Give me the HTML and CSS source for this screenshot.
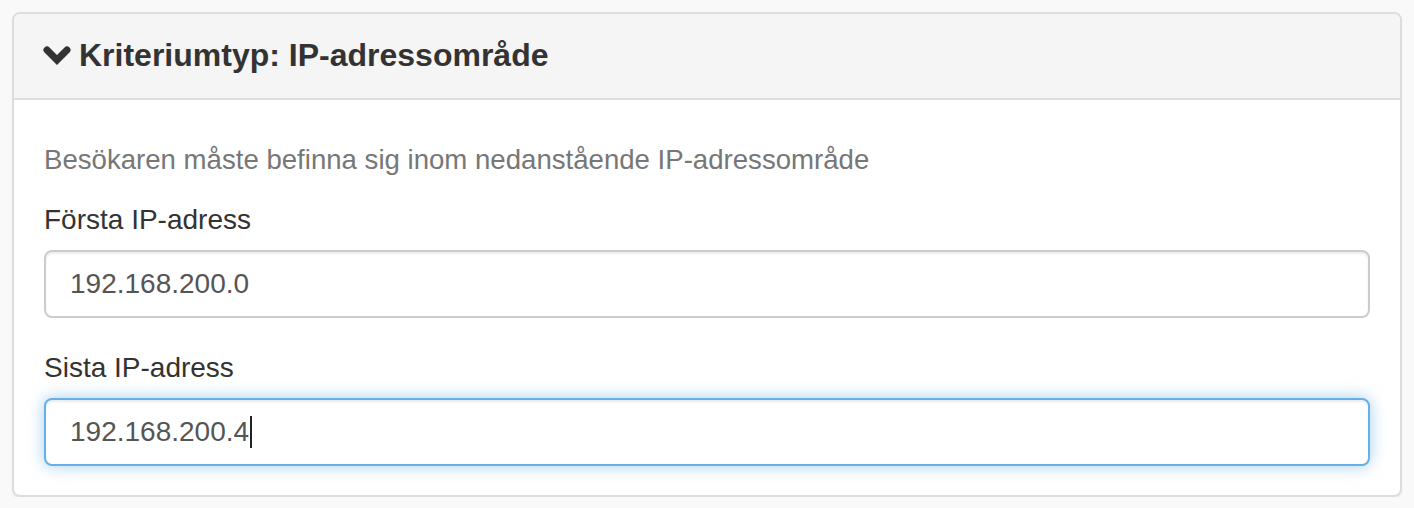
FILE: index.html
```html
<!DOCTYPE html>
<html lang="sv">
<head>
<meta charset="utf-8">
<title>Kriteriumtyp</title>
<link rel="stylesheet" href="styles.css">
</head>
<body>
<div class="panel">
  <div class="panel-heading">
    <svg class="chevron" width="28" height="20" viewBox="0 0 28 20" aria-hidden="true">
      <polyline points="4,4 14,14 24,4" fill="none" stroke="#333" stroke-width="7" stroke-linecap="round" stroke-linejoin="miter"/>
    </svg>
    <h3 class="panel-title">Kriteriumtyp: IP-adressområde</h3>
  </div>
  <div class="panel-body">
    <p class="help-block">Besökaren måste befinna sig inom nedanstående IP-adressområde</p>
    <div class="form-group">
      <label class="control-label" for="first">Första IP-adress</label>
      <input class="form-control" id="first" type="text" value="192.168.200.0">
    </div>
    <div class="form-group last">
      <label class="control-label">Sista IP-adress</label>
      <div class="form-control focused"><span class="value">192.168.200.4</span><span class="caret"></span></div>
    </div>
  </div>
</div>
</body>
</html>
```

FILE: styles.css
```css
* { box-sizing: border-box; }
html, body { margin: 0; }
body {
  background: #f9f9f9;
  padding: 12px 12px 0 12px;
  font-family: "Liberation Sans", Arial, sans-serif;
  color: #333;
}
.panel {
  background: #fff;
  border: 2px solid #dddddd;
  border-radius: 8px;
  box-shadow: 0 2px 2px rgba(0,0,0,0.05);
}
.panel-heading {
  height: 86px;
  background: #f5f5f5;
  border-bottom: 2px solid #dddddd;
  border-radius: 6px 6px 0 0;
  padding: 0 30px 0 29px;
  display: flex;
  align-items: center;
  gap: 8px;
}
.chevron { display: block; flex: none; margin-top: -1px; }
.panel-title {
  margin: 0;
  font-size: 32px;
  font-weight: bold;
  line-height: 1.1;
  color: #333;
}
.panel-body {
  padding: 30px 30px 29px 30px;
}
.help-block {
  margin: 10px 0 20px 0;
  font-size: 27.6px;
  line-height: 40px;
  color: #777777;
}
.form-group { margin-bottom: 30px; }
.form-group.last { margin-bottom: 0; }
.control-label {
  display: block;
  margin-bottom: 10px;
  font-size: 28px;
  line-height: 40px;
  color: #333;
  font-weight: normal;
}
.form-control {
  display: flex;
  align-items: center;
  width: 100%;
  height: 68px;
  padding: 0 24px;
  font-family: "Liberation Sans", Arial, sans-serif;
  font-size: 28px;
  color: #555;
  background: #fff;
  border: 2px solid #cccccc;
  border-radius: 8px;
  box-shadow: inset 0 2px 2px rgba(0,0,0,0.075);
  outline: none;
}
.form-control.focused {
  border-color: #66afe9;
  box-shadow: inset 0 2px 2px rgba(0,0,0,0.075), 0 0 16px rgba(102,175,233,0.6);
}
.caret {
  display: inline-block;
  width: 2px;
  height: 32px;
  margin-left: 1px;
  background: #222;
}
```
